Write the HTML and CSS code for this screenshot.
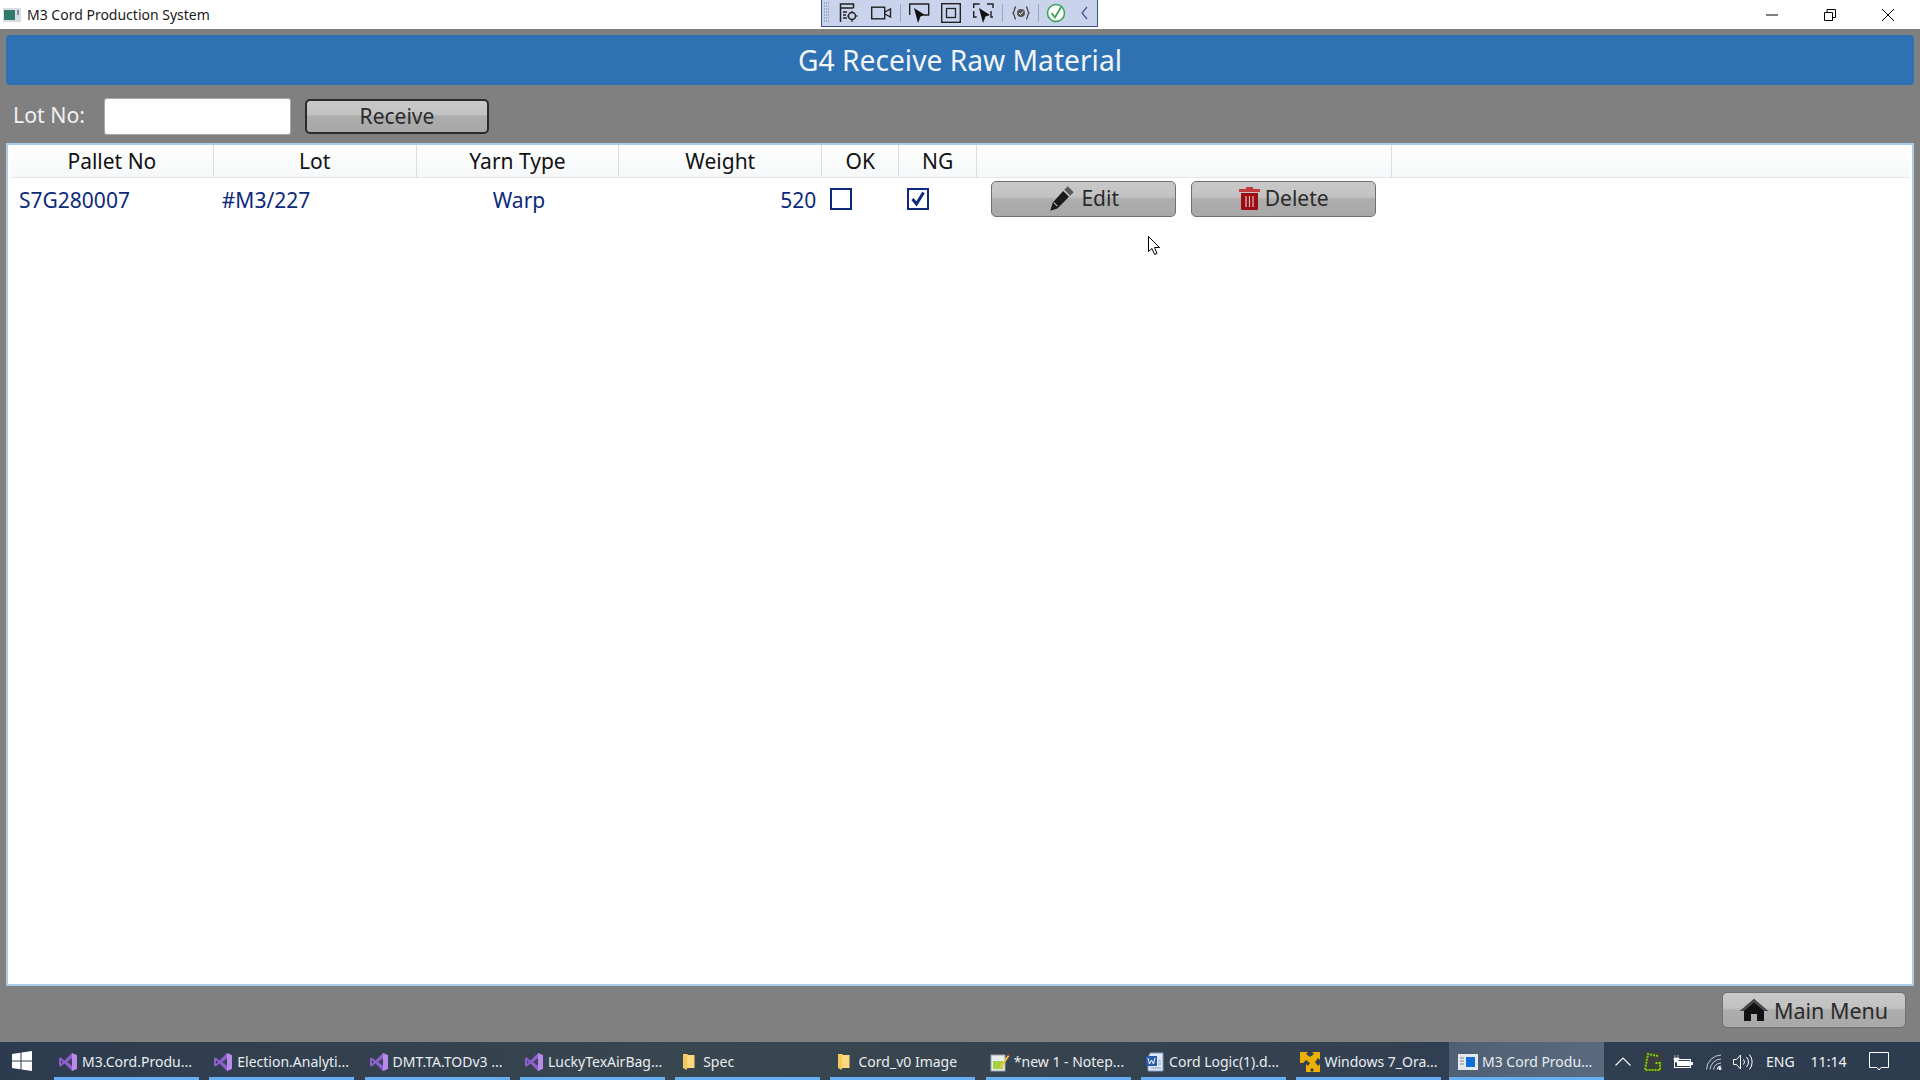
FILE: index.html
```html
<!DOCTYPE html>
<html lang="en">
<head>
<meta charset="utf-8">
<title>M3 Cord Production System</title>
<link rel="stylesheet" href="styles.css">
</head>
<body>
<svg class="defs" width="0" height="0" aria-hidden="true">
  <defs>
    <symbol id="vs" viewBox="0 0 20 20">
      <path d="M14 1l5 2.200v13.600L14 19 6.500 11.600 2.700 14.600 1 13.700V6.300l1.700-.9 3.800 3L14 1z" fill="#8f5fd0"/>
      <path d="M14 1l5 2.200v13.600L14 19z" fill="#b98ae8"/>
      <path d="M14 6.200v7.600L9 10z" fill="#3a4656"/>
      <path d="M3 8v4l2-2z" fill="#3a4656"/>
    </symbol>
    <symbol id="folder" viewBox="0 0 14 20">
      <path d="M1 2h4l1 1h6.500v13H1z" fill="#fbd97c"/>
      <path d="M1 2l4 1v15l-4-2z" fill="#f3c95d"/>
    </symbol>
  </defs>
</svg>

<header class="titlebar">
  <svg class="app-icon" width="18" height="14" viewBox="0 0 18 14"><rect width="18" height="14" fill="#d7dde2"/><rect x="1" y="2" width="11" height="10" fill="#2f7a6d"/><rect x="14" y="2" width="2" height="5" fill="#7d8b96"/></svg>
  <span class="app-title">M3 Cord Production System</span>
  <div class="win-controls">
    <svg width="12" height="12" viewBox="0 0 12 12"><path d="M0 6h12" stroke="#000" fill="none"/></svg>
    <svg width="12" height="12" viewBox="0 0 12 12"><path d="M.5 3.500h8v8h-8zM3 3.500V.5h8.500v8H8.500" stroke="#000" fill="none"/></svg>
    <svg width="12" height="12" viewBox="0 0 12 12"><path d="M0 0l12 12M12 0L0 12" stroke="#000" fill="none"/></svg>
  </div>
</header>

<div class="xaml-toolbar">
  <svg class="xt-grip" width="6" height="22" viewBox="0 0 6 22"><path d="M0 1h6M0 4h6M0 7h6M0 10h6M0 13h6M0 16h6M0 19h6" stroke="#6f7892" stroke-dasharray="1 1"/></svg>
  <svg class="xt-1" width="20" height="20" viewBox="0 0 20 20"><path d="M1.500 19V1h13v4M1.500 5h13M4 9h4M4 12h3M4 15h4" stroke="#222" fill="none" stroke-width="1.500"/><circle cx="13" cy="13" r="3.500" stroke="#222" fill="none" stroke-width="1.500"/><path d="M13 8v2M13 16v3M8 13h2M16 13h3" stroke="#222" stroke-width="1.200"/></svg>
  <svg class="xt-2" width="21" height="14" viewBox="0 0 21 14"><rect x=".7" y="1.200" width="13" height="11.600" stroke="#222" fill="none" stroke-width="1.400"/><path d="M14 6l5.500-3v8L14 8" stroke="#222" fill="none" stroke-width="1.400"/></svg>
  <span class="xt-sep"></span>
  <svg class="xt-3" width="21" height="21" viewBox="0 0 21 21"><path d="M.7 12V1h19v11h-5" stroke="#222" fill="none" stroke-width="1.400"/><path d="M5 5l11 7-4.500 1.500L9 20z" fill="#111"/></svg>
  <svg class="xt-4" width="20" height="20" viewBox="0 0 20 20"><rect x=".7" y=".7" width="18.600" height="18.600" stroke="#222" fill="none" stroke-width="1.400"/><rect x="5.500" y="5.500" width="9" height="9" stroke="#222" fill="none" stroke-width="1.300"/></svg>
  <svg class="xt-5" width="21" height="21" viewBox="0 0 21 21"><path d="M.7 5V1h6M14 1h6v4M.7 8v6h3M18 8v6h2" stroke="#222" fill="none" stroke-width="1.400"/><path d="M6 5l11 7-4.500 1.500-2.500 6.500z" fill="#111"/></svg>
  <span class="xt-sep"></span>
  <svg class="xt-6" width="18" height="16" viewBox="0 0 18 16"><path d="M4 2C2 2 3 7 1 8c2 1 1 6 3 6M14 2c2 0 1 5 3 6-2 1-1 6-3 6" stroke="#444" fill="none" stroke-width="1.300"/><circle cx="9" cy="8" r="4" fill="#555"/><path d="M7 8l1.500 1.500L11 6.500" stroke="#fff" fill="none"/></svg>
  <span class="xt-sep"></span>
  <svg class="xt-7" width="20" height="20" viewBox="0 0 20 20"><circle cx="10" cy="10" r="8.500" fill="#fff" stroke="#31a24c" stroke-width="1.500"/><path d="M5.500 10l3.500 4.500L15 4" stroke="#31a24c" fill="none" stroke-width="1.700"/></svg>
  <svg class="xt-8" width="7" height="14" viewBox="0 0 7 14"><path d="M6 1L1 7l5 6" stroke="#3f4f8e" fill="none" stroke-width="1.200"/></svg>
</div>

<main class="client">
  <h1 class="page-title">G4 Receive Raw Material</h1>

  <form class="lot-bar">
    <label class="lot-label" for="lot">Lot No:</label>
    <input class="lot-input" id="lot" type="text">
    <button class="btn btn-receive" type="button">Receive</button>
  </form>

  <section class="grid">
    <div class="grid-row grid-head">
      <div class="hcell">Pallet No</div>
      <div class="hcell">Lot</div>
      <div class="hcell">Yarn Type</div>
      <div class="hcell">Weight</div>
      <div class="hcell">OK</div>
      <div class="hcell">NG</div>
      <div class="hcell"></div>
    </div>
    <div class="grid-row grid-data">
      <div class="cell">S7G280007</div>
      <div class="cell">#M3/227</div>
      <div class="cell cell-center">Warp</div>
      <div class="cell cell-right">520</div>
      <div class="cell"><span class="check"></span></div>
      <div class="cell"><span class="check"><svg width="16" height="16" viewBox="0 0 16 16"><path d="M2.500 8l4 5L13.500 1.500" stroke="#0d2a7c" fill="none" stroke-width="3"/></svg></span></div>
      <div class="cell cell-actions">
        <button class="btn btn-row" type="button">
          <svg width="28" height="28" viewBox="0 0 24 24"><path d="M17 2l5 5-3 3-5-5z" fill="#5a5a5a"/><path d="M13 6l5 5L8 21l-6 2 2-7z" fill="#1a1a1a"/><path d="M5 16l3 3" stroke="#bbb" stroke-width="1"/></svg>
          Edit
        </button>
        <button class="btn btn-row" type="button">
          <svg width="21" height="24" viewBox="0 0 21 24"><path d="M0 3h21v3H0z" fill="#c23b3b"/><path d="M7 1h7v2H7z" fill="#c23b3b"/><path d="M2 7h17v16a1 1 0 0 1-1 1H3a1 1 0 0 1-1-1z" fill="#9b0d12"/><path d="M7 10v11M10.500 10v11M14 10v11" stroke="#e6b9b9" stroke-width="1.200"/></svg>
          Delete
        </button>
      </div>
    </div>
  </section>

  <div class="foot-bar">
    <button class="btn btn-menu" type="button">
      <svg width="28" height="24" viewBox="0 0 28 24"><path d="M14 1L0 13h4v10h7v-7h6v7h7V13h4z" fill="#111"/><path d="M14 1L0 13h4L14 4.500 24 13h4z" fill="#4a4a4a"/></svg>
      Main Menu
    </button>
  </div>
</main>

<footer class="taskbar">
  <div class="start">
    <svg width="20" height="20" viewBox="0 0 20 20"><path d="M0 3l8.500-1.200V9.500H0zM9.500 1.600L20 0v9.500H9.500zM0 10.500h8.500v7.700L0 17zM9.500 10.500H20V20L9.500 18.400z" fill="#fff"/></svg>
  </div>
  <div class="tasks">
    <div class="task"><svg class="ticon" width="20" height="20"><use href="#vs"/></svg><span>M3.Cord.Produ...</span></div>
    <div class="task"><svg class="ticon" width="20" height="20"><use href="#vs"/></svg><span>Election.Analyti...</span></div>
    <div class="task"><svg class="ticon" width="20" height="20"><use href="#vs"/></svg><span>DMT.TA.TODv3 ...</span></div>
    <div class="task"><svg class="ticon" width="20" height="20"><use href="#vs"/></svg><span>LuckyTexAirBag...</span></div>
    <div class="task task-folder"><svg class="ticon" width="14" height="20"><use href="#folder"/></svg><span>Spec</span></div>
    <div class="task task-folder"><svg class="ticon" width="14" height="20"><use href="#folder"/></svg><span>Cord_v0 Image</span></div>
    <div class="task"><svg class="ticon" width="20" height="20" viewBox="0 0 20 20"><rect x="1" y="3" width="14" height="16" fill="#e9edf0" stroke="#9aa4ac"/><rect x="3" y="9" width="10" height="8" fill="#a6d13e"/><path d="M10 14L18 3l1.500 1L12 15l-2.500 1z" fill="#f4c33c"/><path d="M18 1l2 2-1 1-2-2z" fill="#b01e1e"/></svg><span>*new 1 - Notep...</span></div>
    <div class="task"><svg class="ticon" width="20" height="20" viewBox="0 0 20 20"><path d="M5 1h13v18H3V6z" fill="#dfe8f4" stroke="#7f9cc7"/><rect x="1" y="4" width="11" height="10" fill="#2a5caa"/><path d="M3 6l1.500 6L6.500 8 8.500 12 10 6" stroke="#fff" fill="none"/><path d="M13 9h3M13 12h3M6 16h10" stroke="#7f9cc7"/></svg><span>Cord Logic(1).d...</span></div>
    <div class="task"><svg class="ticon" width="20" height="20" viewBox="0 0 20 20"><path d="M0 0h8l-2 2 4 3 4-3-2-2h8v8l-2-2-3 4 3 4 2-2v8h-8l2-2-2-2-2 2 2 2H6v-8l2 2 2-3-4-3-3 3H0z" fill="#eeb000"/></svg><span>Windows 7_Ora...</span></div>
    <div class="task task-active"><svg class="ticon" width="20" height="20" viewBox="0 0 20 20"><rect y="2" width="20" height="16" fill="#e6e9ec"/><rect x="8" y="5" width="9" height="10" fill="#0f6fd6"/><path d="M2 6h4M2 9h4M2 12h4" stroke="#7d8790"/></svg><span>M3 Cord Produ...</span></div>
  </div>
  <div class="tray">
    <svg class="tray-chevron" width="16" height="9" viewBox="0 0 16 9"><path d="M.5 8.500L8 1l7.500 7.500" stroke="#fff" fill="none" stroke-width="1.100"/></svg>
    <svg class="tray-g" width="20" height="20" viewBox="0 0 20 20"><rect width="20" height="20" fill="#3a3f3c"/><path d="M15 4L5 2 2 18h15v-7h-5" stroke="#7fd300" fill="none" stroke-width="2" stroke-dasharray="2 1"/></svg>
    <svg class="tray-batt" width="20" height="14" viewBox="0 0 20 14"><path d="M2 0v3M5 0v3M1 3h5v2H5v2H2V5H1z" fill="#fff" stroke="#fff" stroke-width=".6"/><rect x="1.500" y="4.500" width="16" height="8" fill="none" stroke="#fff"/><rect x="4" y="6" width="13" height="5" fill="#fff"/><rect x="18" y="7" width="2" height="3" fill="#fff"/></svg>
    <svg class="tray-wifi" width="16" height="16" viewBox="0 0 16 16"><path d="M.5 15.500A15 15 0 0 1 15 1M4 15.500A11.500 11.500 0 0 1 15 5M7.500 15.500A8 8 0 0 1 15 9" stroke="#c9ced4" fill="none"/><path d="M11 15.500A4 4 0 0 1 15 12" stroke="#fff" fill="none"/><circle cx="14" cy="14.500" r="1.500" fill="#fff"/></svg>
    <svg class="tray-vol" width="20" height="16" viewBox="0 0 20 16"><path d="M.5 5.500h3l4-4.500v14l-4-4.500h-3z" stroke="#fff" fill="none"/><path d="M10.500 5.500a4 4 0 0 1 0 5M13.500 3a8 8 0 0 1 0 10M16.500 .5a12 12 0 0 1 0 15" stroke="#fff" fill="none"/></svg>
    <span class="tray-lang">ENG</span>
    <span class="tray-clock">11:14</span>
    <svg class="tray-note" width="20" height="19" viewBox="0 0 20 19"><path d="M.5.500h19v15H12l-2 2.500-2-2.500H.5z" stroke="#fff" fill="none"/></svg>
  </div>
</footer>

<svg class="cursor" width="13" height="20" viewBox="0 0 13 20"><path d="M.5.500v15l3.500-3 2.500 6 2.500-1-2.500-6h5z" fill="#fff" stroke="#000"/></svg>
</body>
</html>
```

FILE: styles.css
```css
* { box-sizing: border-box; }
html, body { margin: 0; height: 100%; }
body {
  width: 1920px;
  height: 1080px;
  overflow: hidden;
  display: flex;
  flex-direction: column;
  position: relative;
  font-family: "Noto Sans", "Open Sans", sans-serif;
  background: #808080;
}
.defs { position: absolute; }

.titlebar {
  height: 29px;
  flex: none;
  background: #fff;
  display: flex;
  align-items: center;
  padding-left: 3px;
  color: #1a1a1a;
}
.app-icon { margin-right: 6px; }
.app-title { font-size: 14px; }
.win-controls {
  margin-left: auto;
  margin-right: 26px;
  display: flex;
  gap: 46px;
}

.xaml-toolbar {
  position: absolute;
  left: 821px;
  top: 0;
  width: 277px;
  height: 27px;
  background: #c9d3ec;
  border: 1px solid #3f4f8e;
  border-top: 0;
  display: flex;
  align-items: center;
  padding-left: 2px;
}
.xaml-toolbar svg { flex: none; }
.xt-sep { width: 1px; height: 18px; background: #9aa6c6; margin-left: 8px; flex: none; }
.xt-1 { margin-left: 9px; }
.xt-2 { margin-left: 12px; }
.xt-3 { margin-left: 8px; }
.xt-4 { margin-left: 11px; }
.xt-5 { margin-left: 12px; }
.xt-6 { margin-left: 9px; }
.xt-7 { margin-left: 7px; }
.xt-8 { margin-left: 15px; }

.client {
  flex: 1;
  min-height: 0;
  padding: 6px 6px 0;
  display: flex;
  flex-direction: column;
  background: #808080;
}
.page-title {
  margin: 0;
  height: 50px;
  flex: none;
  background: #2e72b4;
  border-radius: 4px;
  color: #f2f5f8;
  font-size: 28.2px;
  font-weight: 400;
  text-align: center;
  line-height: 50px;
}

.lot-bar {
  height: 58px;
  flex: none;
  display: flex;
  align-items: center;
  padding: 4px 0 0 7px;
}
.lot-label { color: #f0f0f0; font-size: 21.3px; width: 91px; margin-top: -3px; }
.lot-input {
  width: 187px;
  height: 37px;
  background: #fff;
  border: 1px solid #a9a9a9;
  border-radius: 3px;
  margin-right: 14px;
}

.btn {
  font-family: inherit;
  color: #2a2a2a;
  background: linear-gradient(#c9c9c9 0%, #c2c2c2 44%, #adadad 50%, #a8a8a8 100%);
  border: 1px solid #707070;
  border-radius: 5px;
  display: flex;
  align-items: center;
  justify-content: center;
  padding: 0;
}
.btn-receive {
  width: 184px;
  height: 35px;
  border: 2px solid #2b2b2b;
  font-size: 21px;
  padding-bottom: 1px;
}
.btn-row {
  width: 185px;
  height: 36px;
  font-size: 21px;
  gap: 5px;
  padding-bottom: 2px;
}
.btn-row svg { flex: none; }
.btn-menu {
  width: 184px;
  height: 36px;
  font-size: 21.5px;
  gap: 6px;
}

.grid {
  flex: 1;
  min-height: 0;
  background: #fff;
  border: 2px solid #a9cde8;
  padding: 0 3px;
}
.grid-row {
  display: grid;
  grid-template-columns: 202.800px 202.800px 202.800px 202.800px 77px 78px 415px;
}
.grid-head {
  height: 33px;
  border-bottom: 1px solid #e4e6e8;
  background: linear-gradient(#fff, #f6f8f9);
}
.hcell {
  color: #111;
  font-size: 21px;
  text-align: center;
  line-height: 33px;
  border-right: 1px solid #dcdfe2;
}
.grid-data { height: 40px; }
.cell {
  color: #0d2a7c;
  font-size: 21px;
  line-height: 44px;
  padding: 0 6px 0 8px;
  display: flex;
  align-items: center;
  height: 44px;
}
.cell-center { justify-content: center; }
.cell-right { justify-content: flex-end; }
.check {
  width: 22px;
  height: 22px;
  border: 2px solid #0d2a7c;
  background: #fff;
  display: flex;
  align-items: center;
  justify-content: center;
  margin-top: -2px;
}
.cell-actions {
  padding-left: 14px;
  gap: 15px;
  align-items: flex-start;
  padding-top: 3px;
}

.foot-bar {
  height: 56px;
  flex: none;
  display: flex;
  justify-content: flex-end;
  align-items: flex-start;
  padding: 6px 8px 0 0;
}

.taskbar {
  height: 38px;
  flex: none;
  background: linear-gradient(90deg, #2d3b4f 0%, #38464f 35%, #38454f 50%, #313f52 75%, #2e3c50 100%);
  color: #e9edf0;
  font-size: 14px;
  display: flex;
  position: relative;
}
.start {
  width: 54px;
  flex: none;
  padding: 9px 0 0 12px;
}
.tasks { display: flex; gap: 10.3px; flex: none; }
.task {
  width: 145px;
  height: 38px;
  display: flex;
  align-items: center;
  gap: 4px;
  padding: 4px 0 0 4px;
  border-bottom: 3px solid #66aef5;
  white-space: nowrap;
}
.task-folder { padding-left: 7px; gap: 7px; }
.task-active {
  width: 155px;
  margin-left: -2.7px;
  padding-left: 9px;
  gap: 4px;
  background: linear-gradient(90deg, #4f5f74, #5a6a7e);
}
.tray {
  flex: 1;
  position: relative;
  display: flex;
  align-items: center;
  padding: 1px 0 0 11px;
  color: #f2f4f6;
}
.tray svg { flex: none; }
.tray-g { margin-left: 12px; }
.tray-batt { margin-left: 10px; }
.tray-wifi { margin-left: 13px; }
.tray-vol { margin-left: 11px; }
.tray-lang { margin-left: 13px; }
.tray-clock { margin-left: 16px; }
.tray-note { margin-left: 23px; }

.cursor {
  position: absolute;
  left: 1148px;
  top: 236px;
}
```
